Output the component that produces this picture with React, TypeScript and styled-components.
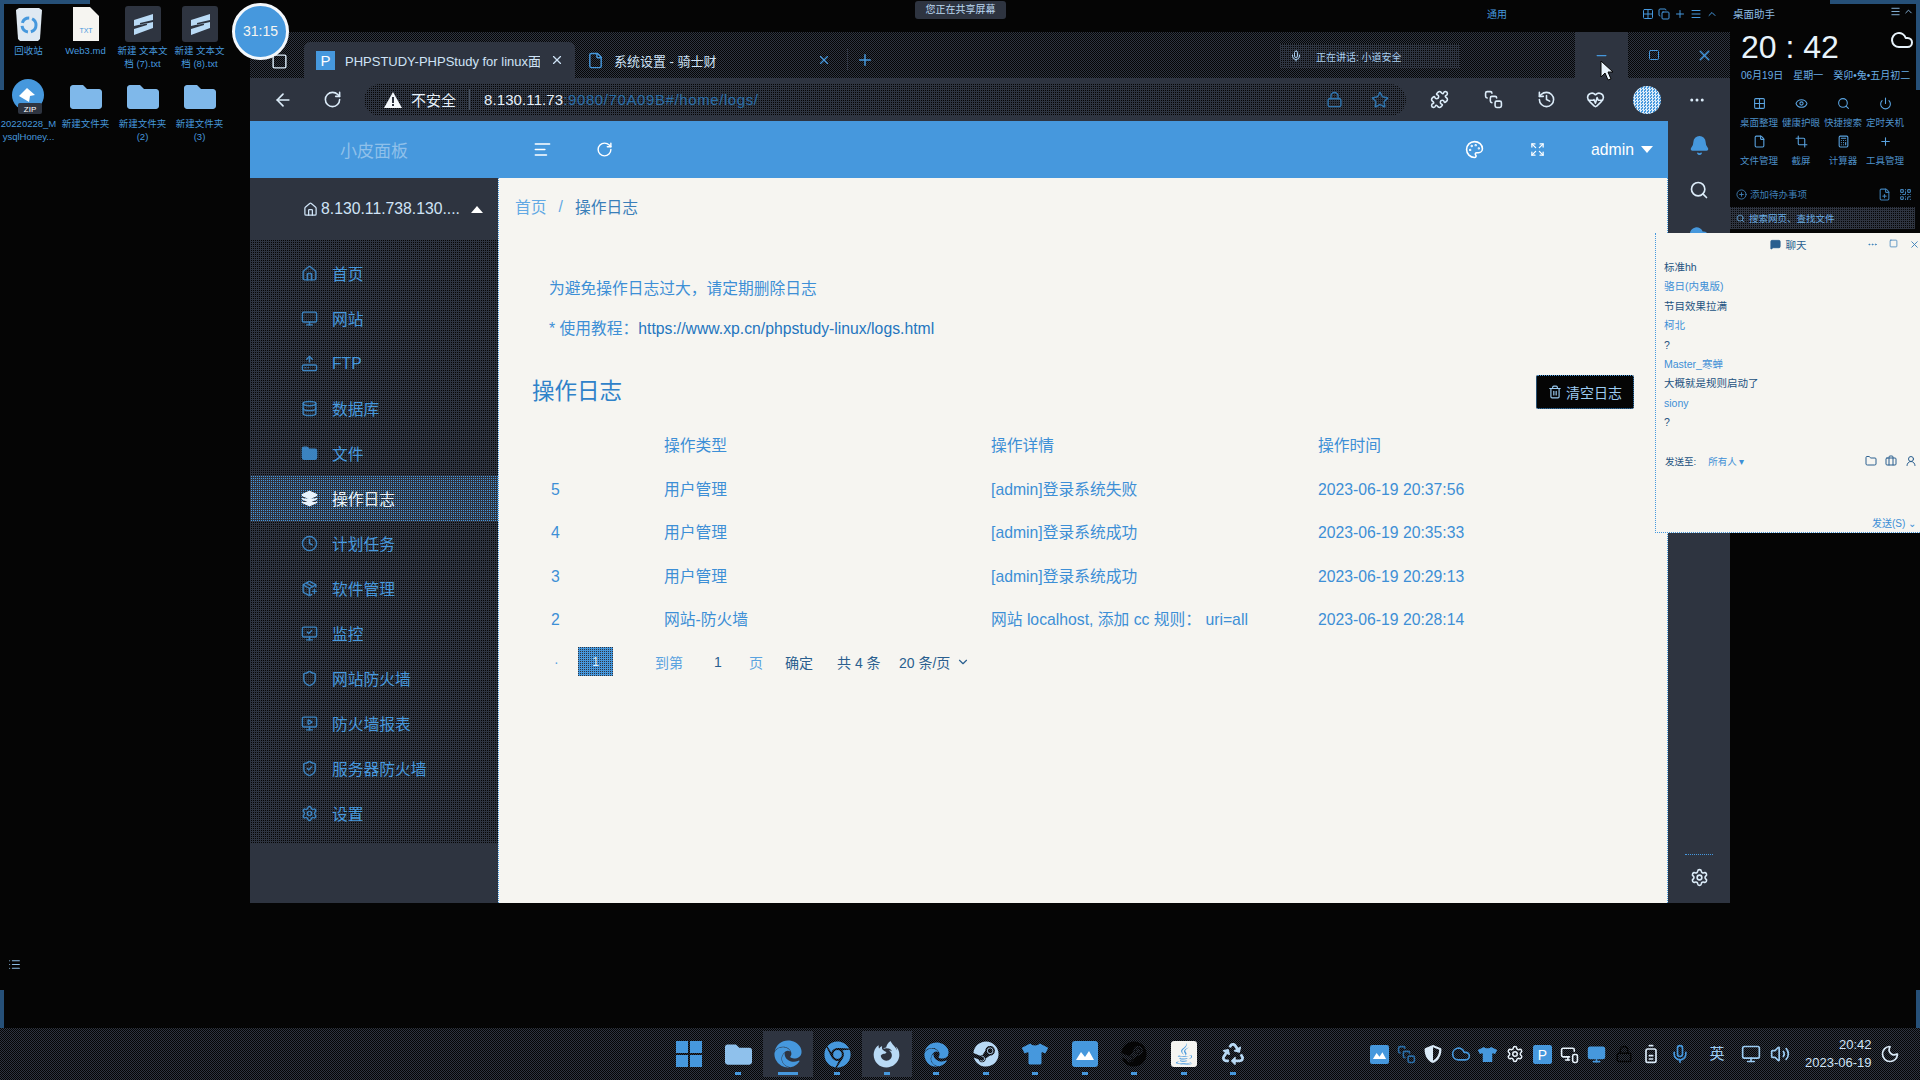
import { ReactNode } from 'react';
import styled, { createGlobalStyle } from 'styled-components';
import {
  ArrowLeft, RotateCw, Star, Puzzle, History, HeartPulse, MoreHorizontal, Minus, Square, X, Plus, File as FileIcon,
  Home, Monitor, HardDriveUpload, Database, Folder, Layers, Clock, PackagePlus, MonitorCheck, Shield, MonitorPlay,
  ShieldCheck, Settings, AlignLeft, Palette, Expand, Bell, Search, Trash2, ChevronDown, Cloud, Eye, Power, Grid2x2,
  Crop, Calculator, CirclePlus, FilePlus, QrCode, Mic, Volume2, Moon, List, Copy, UserRound, Briefcase, Menu,
  Lock, BatteryMedium, MonitorSmartphone, SquareStack, MessageSquare,
} from 'lucide-react';
import { FaChrome, FaEdge, FaFolder, FaJava, FaSteam, FaShieldAlt, FaFirefoxBrowser, FaTshirt, FaRecycle } from 'react-icons/fa';

const BLACK = '#050505';
const SLATE = '#2e3440';
const BLUE = '#4698dd';
const PAPER = '#f6f5f1';

const GlobalStyle = createGlobalStyle`
  html, body { margin: 0; padding: 0; background: ${BLACK}; }
  body { font-family: "Liberation Sans", "Noto Sans CJK SC", sans-serif; }
  * { box-sizing: border-box; }
`;

const checker = `repeating-conic-gradient(${SLATE} 0 25%, ${BLACK} 0 50%) 0 0 / 2px 2px`;
const speckle = `repeating-conic-gradient(${BLACK} 0 25%, ${SLATE} 0 100%) 0 0 / 2px 2px`;

const Desktop = styled.div`
  position: relative;
  width: 1920px;
  height: 1080px;
  overflow: hidden;
  background: ${BLACK};
  color: ${BLUE};
`;

const ShareEdge = styled.div<{ $corner: 'tl' | 'tr' | 'bl' | 'br' }>`
  position: absolute;
  width: 90px;
  height: 90px;
  ${p => (p.$corner[0] === 't' ? 'top: 0;' : 'bottom: 0;')}
  ${p => (p.$corner[1] === 'l' ? 'left: 0;' : 'right: 0;')}
  border: 0 solid #265078;
  border-${p => (p.$corner[0] === 't' ? 'top' : 'bottom')}-width: 4px;
  border-${p => (p.$corner[1] === 'l' ? 'left' : 'right')}-width: 4px;
`;

const IconGrid = styled.div`
  position: absolute;
  left: 0;
  top: 6px;
  display: grid;
  grid-template-columns: repeat(4, 57px);
  grid-auto-rows: 73px;
`;

const DesktopItem = styled.div`
  display: flex;
  flex-direction: column;
  align-items: center;
  font-size: 9.5px;
  line-height: 13px;
  text-align: center;
  word-break: break-all;
  svg { flex: none; }
`;

const DesktopGlyph = styled.div<{ $tile?: boolean }>`
  width: 36px;
  height: 36px;
  margin-bottom: 2px;
  display: flex;
  align-items: center;
  justify-content: center;
  border-radius: 3px;
  background: ${p => (p.$tile ? SLATE : 'transparent')};
`;

const ScreenNotice = styled.div`
  position: absolute;
  left: 915px;
  top: 1px;
  width: 91px;
  height: 18px;
  border-radius: 3px;
  background: ${SLATE};
  color: #bcd9f2;
  font-size: 10px;
  line-height: 18px;
  text-align: center;
`;

const TopLabel = styled.div`
  position: absolute;
  left: 1487px;
  top: 8px;
  font-size: 10px;
  line-height: 13px;
`;

const TopTray = styled.div`
  position: absolute;
  left: 1642px;
  top: 8px;
  display: flex;
  gap: 4px;
`;

const Timer = styled.div`
  position: absolute;
  left: 232px;
  top: 3px;
  width: 57px;
  height: 57px;
  z-index: 3;
  border-radius: 50%;
  border: 3px solid #f4f8fc;
  background: ${BLUE};
  color: ${PAPER};
  font-size: 14px;
  line-height: 51px;
  text-align: center;
`;

const BrowserWindow = styled.div`
  position: absolute;
  left: 250px;
  top: 32px;
  width: 1480px;
  height: 871px;
  display: flex;
  flex-direction: column;
  background: ${SLATE};
`;

const TitleBar = styled.div`
  position: relative;
  height: 46px;
  flex: none;
  display: flex;
  align-items: flex-end;
  background: ${checker};
  padding-left: 54px;
`;

const TabSwitch = styled.div`
  position: absolute;
  left: 21px;
  top: 21px;
  line-height: 0;
  color: #dcecf9;
`;

const Tab = styled.div<{ $active?: boolean; $w: number }>`
  width: ${p => p.$w}px;
  height: 36px;
  display: flex;
  align-items: center;
  gap: 10px;
  padding: 0 11px 0 12px;
  border-radius: 6px 6px 0 0;
  background: ${p => (p.$active ? SLATE : 'transparent')};
  color: #cfe3f6;
  font-size: 13px;
`;

const TabText = styled.span`
  flex: 1;
  overflow: hidden;
  white-space: nowrap;
`;

const Favicon = styled.span`
  width: 19px;
  height: 19px;
  flex: none;
  background: ${BLUE};
  color: #fff;
  font-size: 15px;
  line-height: 19px;
  text-align: center;
`;

const TabDivider = styled.div`
  width: 1px;
  height: 22px;
  margin: 0 0 7px 5px;
  background: ${SLATE};
`;

const NewTab = styled.div`
  margin: 0 0 9px 8px;
  line-height: 0;
`;

const TalkBadge = styled.div`
  position: absolute;
  left: 1030px;
  top: 12px;
  width: 180px;
  height: 24px;
  display: flex;
  align-items: center;
  gap: 14px;
  padding-left: 10px;
  background: ${speckle};
  color: #a9cff0;
  font-size: 10px;
`;

const WindowButtons = styled.div`
  margin-left: auto;
  height: 46px;
  display: flex;
`;

const WindowButton = styled.div<{ $hover?: boolean }>`
  width: ${p => (p.$hover ? 53 : 51)}px;
  display: flex;
  align-items: center;
  justify-content: center;
  background: ${p => (p.$hover ? SLATE : 'transparent')};
`;

const Cursor = styled.svg`
  position: absolute;
  left: 1600px;
  top: 60px;
  z-index: 4;
`;

const Toolbar = styled.div`
  height: 43px;
  flex: none;
  display: flex;
  align-items: center;
  color: #dcecf9;
`;

const ToolButton = styled.div<{ $w: number }>`
  width: ${p => p.$w}px;
  flex: none;
  display: flex;
  justify-content: center;
  line-height: 0;
`;

const AddressBar = styled.div`
  width: 1042px;
  height: 32px;
  flex: none;
  margin: 0 7px 0 15px;
  display: flex;
  align-items: center;
  padding: 0 17px 0 20px;
  border-radius: 16px;
  background: ${speckle};
  font-size: 15px;
`;

const Insecure = styled.span`
  display: flex;
  align-items: center;
  gap: 9px;
  color: #e6f1fb;
  padding-right: 13px;
  border-right: 1px solid #4a5462;
  margin-right: 14px;
`;

const Host = styled.span`
  color: #e6f1fb;
  letter-spacing: 0.1px;
`;

const UrlRest = styled.span`
  flex: 1;
  color: #2a6ea8;
  letter-spacing: 0.6px;
`;

const AddressIcons = styled.div`
  display: flex;
  gap: 28px;
  color: #2f74ad;
`;

const Avatar = styled.div`
  width: 28px;
  height: 28px;
  border-radius: 50%;
  background: repeating-conic-gradient(#dcecf9 0 25%, ${BLUE} 0 50%) 0 0 / 3px 3px;
`;

const BrowserBody = styled.div`
  flex: 1;
  display: flex;
  min-height: 0;
`;

const AppPane = styled.div`
  width: 1418px;
  flex: none;
  display: flex;
  flex-direction: column;
`;

const AppHeader = styled.header`
  height: 57px;
  flex: none;
  display: flex;
  align-items: center;
  background: ${BLUE};
  color: #fff;
`;

const Brand = styled.div`
  width: 283px;
  padding-left: 90px;
  font-size: 17px;
  color: #8fc0ea;
`;

const HeaderButton = styled.div<{ $w: number }>`
  width: ${p => p.$w}px;
  flex: none;
  display: flex;
  justify-content: center;
  line-height: 0;
`;

const HeaderRight = styled.div`
  margin-left: auto;
  display: flex;
  align-items: center;
  padding-right: 15px;
  gap: 46px;
`;

const UserMenu = styled.div`
  display: flex;
  align-items: center;
  gap: 7px;
  font-size: 15.75px;
`;

const Caret = styled.span<{ $up?: boolean }>`
  width: 0;
  height: 0;
  border-left: 6px solid transparent;
  border-right: 6px solid transparent;
  ${p => (p.$up ? 'border-bottom: 7px solid #fff;' : 'border-top: 7px solid #fff;')}
`;

const AppMain = styled.div`
  flex: 1;
  display: flex;
  min-height: 0;
`;

const Sidebar = styled.aside`
  width: 248px;
  flex: none;
  display: flex;
  flex-direction: column;
  background: ${SLATE};
`;

const ServerPicker = styled.div`
  height: 62px;
  flex: none;
  display: flex;
  align-items: center;
  gap: 3px;
  padding-left: 53px;
  color: #cfe3f6;
  font-size: 15.75px;
`;

const ServerName = styled.span`
  width: 147px;
  white-space: nowrap;
`;

const Menu_ = styled.nav`
  padding: 11px 0 7px;
  background: ${speckle};
`;

const MenuItem = styled.div<{ $active?: boolean }>`
  height: 45px;
  display: flex;
  align-items: center;
  gap: 14px;
  padding-left: 51px;
  font-size: 15.75px;
  color: ${p => (p.$active ? '#eaf4fc' : BLUE)};
  ${p => p.$active && `background: repeating-conic-gradient(${BLUE} 0 25%, ${SLATE} 0 100%) 0 0 / 2px 2px;`}
  svg { color: ${p => (p.$active ? '#eaf4fc' : '#3b83c0')}; }
`;

const Content = styled.main`
  flex: 1;
  background: ${PAPER};
  border-left: 1px dotted ${BLUE};
  border-right: 1px dotted ${BLUE};
  padding: 0 33px 0 16px;
  font-size: 15.75px;
  color: #3d8fd6;
`;

const Breadcrumb = styled.div`
  height: 57px;
  display: flex;
  align-items: center;
  gap: 12px;
`;

const CrumbHome = styled.span`
  color: #62a9e4;
`;

const CrumbCurrent = styled.span`
  color: #3a7fb9;
`;

const Notes = styled.div`
  padding: 34px 0 0 34px;
  line-height: 40px;
`;

const TutorialLink = styled.a`
  color: #2476bf;
`;

const TitleRow = styled.div`
  margin-top: 23px;
  display: flex;
  align-items: center;
  justify-content: space-between;
  padding-left: 17px;
`;

const Heading = styled.h2`
  margin: 0 0 3px;
  font-size: 22.5px;
  font-weight: 400;
  color: #2f82c9;
`;

const ClearButton = styled.button`
  width: 98px;
  height: 34px;
  margin-top: 3px;
  display: flex;
  align-items: center;
  justify-content: center;
  gap: 4px;
  border: 1px dotted ${BLUE};
  border-radius: 2px;
  background: ${BLACK};
  color: #9cccf2;
  font: inherit;
  font-size: 14px;
`;

const Row = styled.div`
  display: grid;
  grid-template-columns: 113px 327px 327px 1fr;
  height: 43.5px;
  align-items: baseline;
  padding: 11px 0 0 36px;
`;

const LogTable = styled.div`
  margin-top: 13px;
`;

const Pager = styled.div`
  height: 44px;
  display: flex;
  align-items: center;
  padding-left: 39px;
  font-size: 14px;
`;

const PagerPart = styled.span<{ $w: number; $dark?: boolean }>`
  width: ${p => p.$w}px;
  flex: none;
  display: flex;
  align-items: center;
  gap: 6px;
  white-space: nowrap;
  color: ${p => (p.$dark ? '#2a5f8f' : '#5aa3e0')};
`;

const PageCurrent = styled.span`
  width: 35px;
  height: 29px;
  flex: none;
  margin-right: 42px;
  background: repeating-conic-gradient(${BLUE} 0 75%, ${SLATE} 0 100%) 0 0 / 2px 2px;
  color: #dcecf9;
  font-size: 13px;
  line-height: 29px;
  text-align: center;
`;

const RightRail = styled.aside`
  flex: 1;
  display: flex;
  flex-direction: column;
  align-items: center;
  padding: 14px 0 16px 0;
  gap: 24px;
  color: #dcecf9;
`;

const RailBell = styled.div`
  line-height: 0;
  color: ${BLUE};
`;

const RailFoot = styled.div`
  margin-top: auto;
  width: 28px;
  padding-top: 13px;
  border-top: 1px dotted ${BLUE};
  display: flex;
  justify-content: center;
`;

const Widget = styled.aside`
  position: absolute;
  left: 1730px;
  top: 0;
  width: 190px;
  height: 240px;
`;

const WidgetTitle = styled.div`
  height: 28px;
  padding: 6px 6px 0 3px;
  font-size: 10.5px;
  color: #8dbde6;
  display: flex;
  gap: 2px;
`;

const WidgetTitleText = styled.span`
  flex: 1;
`;

const Clock_ = styled.div`
  height: 38px;
  padding-left: 11px;
  font-size: 32px;
  line-height: 38px;
  color: #e8f3fb;
  white-space: pre;
`;

const WeatherIcon = styled.div`
  position: absolute;
  right: 6px;
  top: 28px;
  color: #e8f3fb;
  line-height: 0;
`;

const DateLine = styled.div`
  margin-top: 3px;
  padding-left: 11px;
  display: flex;
  gap: 10px;
  font-size: 10px;
  line-height: 14px;
  color: #6aaee6;
  white-space: nowrap;
`;

const Tools = styled.div`
  margin-top: 14px;
  display: grid;
  grid-template-columns: repeat(4, 42px);
  padding-left: 8px;
  row-gap: 3px;
`;

const ToolCell = styled.div`
  height: 35px;
  display: flex;
  flex-direction: column;
  align-items: center;
  gap: 7px;
  font-size: 9.5px;
  line-height: 12px;
  color: #4d90c9;
  white-space: nowrap;
  svg { color: #5aa3e0; flex: none; }
`;

const TodoRow = styled.div`
  margin-top: 17px;
  padding: 0 8px 0 6px;
  display: flex;
  align-items: center;
  gap: 3px;
  font-size: 9.5px;
  color: #3f7fb5;
`;

const TodoIcons = styled.div`
  margin-left: auto;
  display: flex;
  gap: 8px;
`;

const WidgetSearch = styled.div`
  margin: 6px 5px 0 0;
  height: 22px;
  display: flex;
  align-items: center;
  gap: 4px;
  padding-left: 6px;
  background: ${speckle};
  font-size: 9.5px;
  color: #6aaee6;
`;

const ChatWindow = styled.section`
  position: absolute;
  left: 1655px;
  top: 233px;
  width: 265px;
  height: 300px;
  z-index: 2;
  background: ${PAPER};
  border-left: 1px dotted ${BLUE};
  border-bottom: 1px dotted ${BLUE};
  color: #3d8fd6;
  font-size: 10.5px;
`;

const ChatHead = styled.div`
  height: 23px;
  display: flex;
  align-items: center;
  justify-content: center;
  gap: 5px;
  color: #2a5f8f;
  position: relative;
`;

const ChatControls = styled.div`
  position: absolute;
  right: 0;
  top: 6px;
  display: flex;
  gap: 11px;
  color: #3a7fb9;
`;

const ChatLog = styled.div`
  padding: 2px 0 0 8px;
`;

const ChatLine = styled.div<{ $msg?: boolean }>`
  height: 19.4px;
  line-height: 19.4px;
  color: ${p => (p.$msg ? '#23527f' : '#3d8fd6')};
`;

const SendRow = styled.div`
  margin-top: 21px;
  padding: 0 3px 0 9px;
  display: flex;
  align-items: center;
  font-size: 9.5px;
  gap: 12px;
`;

const SendTarget = styled.span`
  color: #23527f;
`;

const SendIcons = styled.div`
  margin-left: auto;
  display: flex;
  gap: 8px;
  color: #2a5f8f;
`;

const SendButton = styled.div`
  position: absolute;
  right: 4px;
  bottom: 2px;
  font-size: 10px;
`;

const SideToggle = styled.div`
  position: absolute;
  left: 8px;
  top: 958px;
  line-height: 0;
  color: #8dbde6;
`;

const Taskbar = styled.footer`
  position: absolute;
  left: 0;
  right: 0;
  bottom: 0;
  height: 52px;
  background: ${checker};
  display: flex;
  align-items: center;
  padding: 0 0 0 664px;
`;

const TaskSlot = styled.div<{ $open?: boolean }>`
  position: relative;
  width: 49.5px;
  height: 46px;
  flex: none;
  display: flex;
  align-items: center;
  justify-content: center;
  color: ${BLUE};
  ${p => p.$open && `background: ${SLATE};`}
`;

const TaskDot = styled.span<{ $wide?: boolean }>`
  position: absolute;
  bottom: 2px;
  left: 50%;
  width: ${p => (p.$wide ? 20 : 6)}px;
  height: 3px;
  margin-left: ${p => (p.$wide ? -10 : -3)}px;
  background: ${BLUE};
`;

const Tray = styled.div`
  margin-left: 107.5px;
  display: flex;
  align-items: center;
  color: #9cccf2;
`;

const TrayItem = styled.div<{ $w: number }>`
  width: ${p => p.$w}px;
  flex: none;
  display: flex;
  justify-content: center;
  line-height: 0;
  font-size: 15px;
`;

const TrayClock = styled.div`
  width: 75px;
  flex: none;
  text-align: right;
  font-size: 13px;
  line-height: 18px;
  color: #cfe3f6;
`;

const TrayMoon = styled.div`
  margin-left: 8px;
  line-height: 0;
  color: #dcecf9;
`;

const WinLogo = () => (
  <svg width="26" height="26" viewBox="0 0 26 26" fill={BLUE}>
    <rect x="0" y="0" width="12" height="12" />
    <rect x="14" y="0" width="12" height="12" />
    <rect x="0" y="14" width="12" height="12" />
    <rect x="14" y="14" width="12" height="12" />
  </svg>
);

const TileIcon = ({ bg, size = 26, children }: { bg: string; size?: number; children: ReactNode }) => (
  <svg width={size} height={size} viewBox="0 0 26 26">
    <rect width="26" height="26" rx="3" fill={bg} />
    {children}
  </svg>
);

const Mountain = ({ size = 26 }: { size?: number }) => (
  <TileIcon bg={BLUE} size={size}>
    <path d="M4 19l5-8 4 5 4-6 5 9z" fill="#fff" />
  </TileIcon>
);

const BinIcon = () => (
  <svg width="28" height="34" viewBox="0 0 28 34">
    <path d="M1 3l3-2h20l3 2-2 29-2 2H5l-2-2z" fill="#dfe9f2" />
    <circle cx="14" cy="18" r="7" fill="none" stroke={BLUE} strokeWidth="3" strokeDasharray="9 3" />
  </svg>
);

const ZipIcon = () => (
  <svg width="36" height="36" viewBox="0 0 36 36">
    <circle cx="17" cy="16" r="16" fill={BLUE} />
    <path d="M8 17l8-8 8 7-5 1-1 6z" fill="#fff" />
    <rect x="7" y="24" width="24" height="11" rx="2" fill={SLATE} />
    <text x="19" y="33" fontSize="8" textAnchor="middle" fill="#fff" fontFamily="Liberation Sans">ZIP</text>
  </svg>
);

const NoteIcon = () => (
  <svg width="26" height="34" viewBox="0 0 26 34">
    <path d="M0 0h17l9 9v25H0z" fill={PAPER} />
    <text x="13" y="26" fontSize="7" textAnchor="middle" fill={BLUE} fontFamily="Liberation Sans">TXT</text>
  </svg>
);

const StripeS = () => (
  <svg width="22" height="24" viewBox="0 0 22 24">
    <path d="M21 2L2 8v6l13-3v2L2 17v6l19-7v-6L8 13v-2l13-3z" fill="#b9daf5" />
  </svg>
);

const desktopItems = [
  { label: '回收站', icon: <BinIcon /> },
  { label: 'Web3.md', icon: <NoteIcon /> },
  { label: '新建 文本文档 (7).txt', icon: <StripeS />, tile: true },
  { label: '新建 文本文档 (8).txt', icon: <StripeS />, tile: true },
  { label: '20220228_MysqlHoney...', icon: <ZipIcon /> },
  { label: '新建文件夹', icon: <FaFolder size={32} color="#7fb8ea" /> },
  { label: '新建文件夹 (2)', icon: <FaFolder size={32} color="#7fb8ea" /> },
  { label: '新建文件夹 (3)', icon: <FaFolder size={32} color="#7fb8ea" /> },
];

const menuItems = [
  { label: '首页', icon: Home },
  { label: '网站', icon: Monitor },
  { label: 'FTP', icon: HardDriveUpload },
  { label: '数据库', icon: Database },
  { label: '文件', icon: Folder, fill: true },
  { label: '操作日志', icon: Layers, fill: true, active: true },
  { label: '计划任务', icon: Clock },
  { label: '软件管理', icon: PackagePlus },
  { label: '监控', icon: MonitorCheck },
  { label: '网站防火墙', icon: Shield },
  { label: '防火墙报表', icon: MonitorPlay },
  { label: '服务器防火墙', icon: ShieldCheck },
  { label: '设置', icon: Settings },
];

const logs = [
  { id: 5, type: '用户管理', detail: '[admin]登录系统失败', time: '2023-06-19 20:37:56' },
  { id: 4, type: '用户管理', detail: '[admin]登录系统成功', time: '2023-06-19 20:35:33' },
  { id: 3, type: '用户管理', detail: '[admin]登录系统成功', time: '2023-06-19 20:29:13' },
  { id: 2, type: '网站-防火墙', detail: '网站 localhost, 添加 cc 规则： uri=all', time: '2023-06-19 20:28:14' },
];

const widgetTools = [
  { label: '桌面整理', icon: Grid2x2 },
  { label: '健康护眼', icon: Eye },
  { label: '快捷搜索', icon: Search },
  { label: '定时关机', icon: Power },
  { label: '文件管理', icon: FileIcon },
  { label: '截屏', icon: Crop },
  { label: '计算器', icon: Calculator },
  { label: '工具管理', icon: Plus },
];

const chatLines = [
  { text: '标准hh', msg: true },
  { text: '骆日(内鬼版)' },
  { text: '节目效果拉满', msg: true },
  { text: '柯北' },
  { text: '?', msg: true },
  { text: 'Master_寒蝉' },
  { text: '大概就是规则启动了', msg: true },
  { text: 'siony' },
  { text: '?', msg: true },
];

const taskApps = [
  { icon: <WinLogo /> },
  { icon: <FaFolder size={27} color="#8fc1ec" />, dot: true },
  { icon: <FaEdge size={28} />, open: true, wide: true },
  { icon: <FaChrome size={27} />, dot: true },
  { icon: <FaFirefoxBrowser size={27} color="#b9daf5" />, open: true, dot: true },
  { icon: <FaEdge size={25} />, dot: true },
  { icon: <FaSteam size={26} color="#b9daf5" />, dot: true },
  { icon: <FaTshirt size={26} />, dot: true },
  { icon: <Mountain />, dot: true },
  { icon: <FaSteam size={26} color={BLACK} />, dot: true },
  { icon: <TileIcon bg={PAPER}><foreignObject width="26" height="26"><FaJava size={22} color={BLUE} style={{ margin: 2 }} /></foreignObject></TileIcon>, dot: true },
  { icon: <FaRecycle size={22} color="#b9daf5" />, dot: true },
];

const trayItems: { w: number; node: ReactNode }[] = [
  { w: 27.2, node: <Mountain size={19} /> },
  { w: 27.2, node: <SquareStack size={19} color="#2a6ea8" /> },
  { w: 27.2, node: <FaShieldAlt size={18} color="#dcecf9" /> },
  { w: 27.2, node: <Cloud size={20} color={BLUE} /> },
  { w: 27.2, node: <FaTshirt size={19} color={BLUE} /> },
  { w: 27.2, node: <Settings size={18} color="#eaf4fc" /> },
  { w: 27.2, node: <TileIcon bg={BLUE} size={19}><text x="13" y="20" fontSize="19" textAnchor="middle" fill="#fff" fontFamily="Liberation Sans">P</text></TileIcon> },
  { w: 27.2, node: <MonitorSmartphone size={19} color="#eaf4fc" /> },
  { w: 27.2, node: <Monitor size={19} fill={BLUE} color={BLUE} /> },
  { w: 27.2, node: <Lock size={18} color={BLACK} /> },
  { w: 27.2, node: <BatteryMedium size={20} color="#dcecf9" style={{ transform: 'rotate(-90deg)' }} /> },
  { w: 31, node: <Mic size={20} color={BLUE} /> },
  { w: 43, node: <span>英</span> },
  { w: 25, node: <Monitor size={20} /> },
  { w: 33, node: <Volume2 size={20} /> },
];

function App() {
  return (
    <Desktop>
      <GlobalStyle />
      <ShareEdge $corner="tl" />
      <ShareEdge $corner="tr" />
      <ShareEdge $corner="bl" />
      <ShareEdge $corner="br" />

      <IconGrid>
        {desktopItems.map(item => (
          <DesktopItem key={item.label}>
            <DesktopGlyph $tile={item.tile}>{item.icon}</DesktopGlyph>
            {item.label}
          </DesktopItem>
        ))}
      </IconGrid>

      <ScreenNotice>您正在共享屏幕</ScreenNotice>
      <TopLabel>通用</TopLabel>
      <TopTray>
        <Grid2x2 size={12} />
        <Copy size={12} />
        <Plus size={12} />
        <Menu size={12} />
        <ChevronDown size={12} style={{ transform: 'rotate(180deg)' }} />
      </TopTray>
      <Timer>31:15</Timer>

      <BrowserWindow>
        <TitleBar>
          <TabSwitch><Square size={17} /></TabSwitch>
          <Tab $active $w={271}>
            <Favicon>P</Favicon>
            <TabText>PHPSTUDY-PHPStudy for linux面</TabText>
            <X size={14} />
          </Tab>
          <Tab $w={267}>
            <FileIcon size={17} color={BLUE} />
            <TabText>系统设置 - 骑士财</TabText>
            <X size={14} color={BLUE} />
          </Tab>
          <TabDivider />
          <NewTab><Plus size={18} /></NewTab>
          <TalkBadge>
            <Mic size={12} />
            正在讲话: 小道安全
          </TalkBadge>
          <WindowButtons>
            <WindowButton $hover><Minus size={15} /></WindowButton>
            <WindowButton><Square size={12} /></WindowButton>
            <WindowButton><X size={17} /></WindowButton>
          </WindowButtons>
        </TitleBar>

        <Toolbar>
          <ToolButton $w={66}><ArrowLeft size={20} /></ToolButton>
          <ToolButton $w={33}><RotateCw size={19} /></ToolButton>
          <AddressBar>
            <Insecure>
              <svg width="18" height="16" viewBox="0 0 18 16">
                <path d="M9 0l9 16H0z" fill="#f4f8fc" />
                <rect x="8" y="5" width="2" height="6" fill={SLATE} />
                <rect x="8" y="12" width="2" height="2" fill={SLATE} />
              </svg>
              不安全
            </Insecure>
            <Host>8.130.11.73</Host>
            <UrlRest>:9080/70A09B#/home/logs/</UrlRest>
            <AddressIcons>
              <Lock size={17} />
              <Star size={18} />
            </AddressIcons>
          </AddressBar>
          <ToolButton $w={52}><Puzzle size={19} /></ToolButton>
          <ToolButton $w={57}><SquareStack size={19} /></ToolButton>
          <ToolButton $w={49}><History size={19} /></ToolButton>
          <ToolButton $w={49}><HeartPulse size={19} /></ToolButton>
          <ToolButton $w={53}><Avatar /></ToolButton>
          <ToolButton $w={47}><MoreHorizontal size={18} /></ToolButton>
        </Toolbar>

        <BrowserBody>
          <AppPane>
            <AppHeader>
              <Brand>小皮面板</Brand>
              <HeaderButton $w={19}><AlignLeft size={19} /></HeaderButton>
              <HeaderButton $w={105}><RotateCw size={17} /></HeaderButton>
              <HeaderRight>
                <Palette size={19} />
                <Expand size={15} />
                <UserMenu>admin <Caret /></UserMenu>
              </HeaderRight>
            </AppHeader>

            <AppMain>
              <Sidebar>
                <ServerPicker>
                  <Home size={15} />
                  <ServerName>8.130.11.738.130....</ServerName>
                  <Caret $up />
                </ServerPicker>
                <Menu_>
                  {menuItems.map(item => (
                    <MenuItem key={item.label} $active={item.active}>
                      <item.icon size={17} fill={item.fill ? 'currentColor' : 'none'} />
                      {item.label}
                    </MenuItem>
                  ))}
                </Menu_>
              </Sidebar>

              <Content>
                <Breadcrumb>
                  <CrumbHome>首页</CrumbHome>
                  <CrumbHome>/</CrumbHome>
                  <CrumbCurrent>操作日志</CrumbCurrent>
                </Breadcrumb>
                <Notes>
                  <div>为避免操作日志过大，请定期删除日志</div>
                  <div>* 使用教程：<TutorialLink>https://www.xp.cn/phpstudy-linux/logs.html</TutorialLink></div>
                </Notes>
                <TitleRow>
                  <Heading>操作日志</Heading>
                  <ClearButton><Trash2 size={14} /> 清空日志</ClearButton>
                </TitleRow>
                <LogTable>
                  <Row>
                    <span />
                    <span>操作类型</span>
                    <span>操作详情</span>
                    <span>操作时间</span>
                  </Row>
                  {logs.map(log => (
                    <Row key={log.id}>
                      <span>{log.id}</span>
                      <span>{log.type}</span>
                      <span>{log.detail}</span>
                      <span>{log.time}</span>
                    </Row>
                  ))}
                </LogTable>
                <Pager>
                  <PagerPart $w={24}>·</PagerPart>
                  <PageCurrent>1</PageCurrent>
                  <PagerPart $w={59}>到第</PagerPart>
                  <PagerPart $w={35} $dark>1</PagerPart>
                  <PagerPart $w={36}>页</PagerPart>
                  <PagerPart $w={52} $dark>确定</PagerPart>
                  <PagerPart $w={62} $dark>共 4 条</PagerPart>
                  <PagerPart $w={80} $dark>20 条/页 <ChevronDown size={14} /></PagerPart>
                </Pager>
              </Content>
            </AppMain>
          </AppPane>

          <RightRail>
            <RailBell><Bell size={21} fill={BLUE} /></RailBell>
            <Search size={20} />
            <RailBell><Cloud size={20} fill={BLUE} /></RailBell>
            <RailFoot><Settings size={19} /></RailFoot>
          </RightRail>
        </BrowserBody>
      </BrowserWindow>

      <Cursor width="14" height="22" viewBox="0 0 14 22">
        <path d="M1 1v16l4-4 3 7 3-1-3-7h5z" fill="#eaf4fc" stroke={BLACK} />
      </Cursor>

      <Widget>
        <WidgetTitle>
          <WidgetTitleText>桌面助手</WidgetTitleText>
          <Menu size={11} />
          <ChevronDown size={11} style={{ transform: 'rotate(180deg)' }} />
        </WidgetTitle>
        <Clock_>20 : 42</Clock_>
        <WeatherIcon><Cloud size={24} /></WeatherIcon>
        <DateLine>
          <span>06月19日</span>
          <span>星期一</span>
          <span>癸卯•兔•五月初二</span>
        </DateLine>
        <Tools>
          {widgetTools.map(tool => (
            <ToolCell key={tool.label}>
              <tool.icon size={13} />
              {tool.label}
            </ToolCell>
          ))}
        </Tools>
        <TodoRow>
          <CirclePlus size={11} />
          添加待办事项
          <TodoIcons>
            <FilePlus size={13} />
            <QrCode size={13} />
          </TodoIcons>
        </TodoRow>
        <WidgetSearch>
          <Search size={9} />
          搜索网页、查找文件
        </WidgetSearch>
      </Widget>

      <ChatWindow>
        <ChatHead>
          <MessageSquare size={11} fill="currentColor" />
          聊天
          <ChatControls>
            <MoreHorizontal size={11} />
            <Square size={9} />
            <X size={11} />
          </ChatControls>
        </ChatHead>
        <ChatLog>
          {chatLines.map((line, i) => (
            <ChatLine key={i} $msg={line.msg}>{line.text}</ChatLine>
          ))}
        </ChatLog>
        <SendRow>
          <SendTarget>发送至:</SendTarget>
          <span>所有人 ▾</span>
          <SendIcons>
            <Folder size={12} />
            <Briefcase size={12} />
            <UserRound size={12} />
          </SendIcons>
        </SendRow>
        <SendButton>发送(S) ⌄</SendButton>
      </ChatWindow>

      <SideToggle><List size={13} /></SideToggle>

      <Taskbar>
        {taskApps.map((app, i) => (
          <TaskSlot key={i} $open={app.open}>
            {app.icon}
            {(app.dot || app.wide) && <TaskDot $wide={app.wide} />}
          </TaskSlot>
        ))}
        <Tray>
          {trayItems.map((item, i) => <TrayItem key={i} $w={item.w}>{item.node}</TrayItem>)}
        </Tray>
        <TrayClock>20:42<br />2023-06-19</TrayClock>
        <TrayMoon><Moon size={20} /></TrayMoon>
      </Taskbar>
    </Desktop>
  );
}

export default App;
